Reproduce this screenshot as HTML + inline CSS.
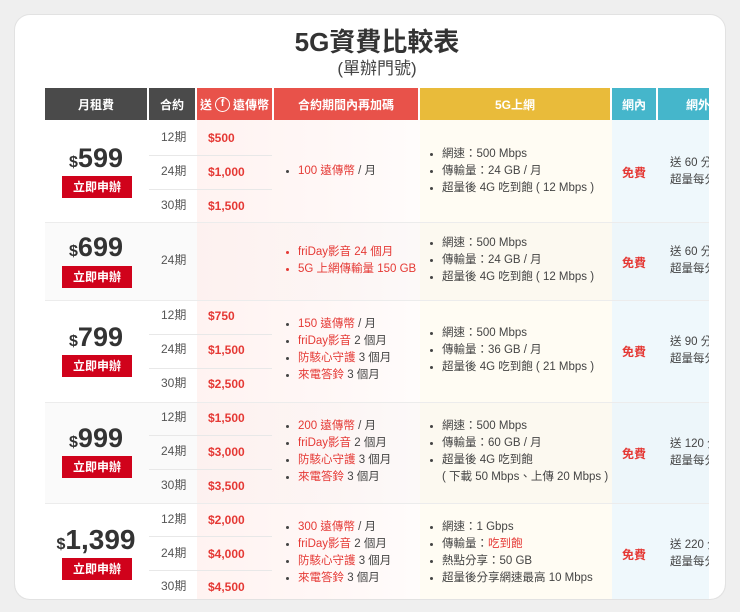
<!DOCTYPE html>
<html><head><meta charset="utf-8"><style>
*{margin:0;padding:0;box-sizing:border-box}
body{width:740px;height:612px;background:#efefef;font-family:"Liberation Sans","Noto Sans CJK TC",sans-serif;position:relative;overflow:hidden;color:#444}
.a{position:absolute}
.h{position:absolute;top:88px;height:32px;color:#fff;font-size:12px;font-weight:bold;display:flex;align-items:center;justify-content:center}
.r{color:#e53935}
.btn{position:absolute;left:62px;width:70px;height:22px;background:#d0021b;color:#fff;font-size:12px;font-weight:bold;text-align:center;line-height:22px}
.price{position:absolute;left:45px;width:102px;text-align:center;font-weight:bold;color:#333;font-size:27px}
.price small{font-size:16px}
.p{position:absolute;left:161px;font-size:12px;color:#555;margin-top:-3px}
.m{position:absolute;left:208px;font-size:12px;color:#e53935;font-weight:bold}
ul{position:absolute;font-size:11.5px;line-height:17px;padding-left:14px;color:#444}
li::marker{font-size:9px}
.sl{position:absolute;left:149px;width:123px;height:1px;background:#e8e8e8}
.rl{position:absolute;left:45px;width:664px;height:1px;background:#ececec}
.f{position:absolute;left:612px;width:44px;text-align:center;font-size:12px;color:#e53935;font-weight:bold}
.o{position:absolute;left:670px;font-size:11.5px;line-height:17px;white-space:nowrap;width:39px;overflow:hidden}
</style></head><body>
<div style="position:absolute;left:0;top:0;width:740px;height:612px">
<div class="a" style="left:0;top:0;width:740px;height:612px;background:#efefef"></div>
<div class="a" style="left:14px;top:14px;width:712px;height:586px;background:#fff;border-radius:16px;border:1px solid #e2e2e2"></div>
<div class="a" style="left:0;top:22px;width:740px;text-align:center;font-size:26px;font-weight:bold;color:#333;padding-left:14px">5G資費比較表</div>
<div class="a" style="left:0;top:54px;width:740px;text-align:center;font-size:17px;color:#444;padding-left:14px">(單辦門號)</div>
<div class="a" style="left:45px;top:222px;width:664px;height:78px;background:#fafafa"></div>
<div class="a" style="left:45px;top:402px;width:664px;height:101px;background:#fafafa"></div>
<div class="a" style="left:197px;top:120px;width:223px;height:480px;background:linear-gradient(90deg,rgba(255,235,232,.6),rgba(255,240,238,.5) 60%,rgba(255,248,246,.4))"></div>
<div class="a" style="left:420px;top:120px;width:192px;height:480px;background:rgba(255,246,220,.35)"></div>
<div class="a" style="left:612px;top:120px;width:97px;height:480px;background:rgba(225,242,250,.55)"></div>
<div class="h" style="left:45px;width:102px;background:#4a4a4a">月租費</div>
<div class="h" style="left:149px;width:46px;background:#4a4a4a">合約</div>
<div class="h" style="left:197px;width:75px;background:#e8524a">送 <span style="display:inline-block;width:15px;height:15px;border-radius:50%;border:1.5px solid #fff;font-size:10px;line-height:12px;text-align:center;margin:0 3px">f</span> 遠傳幣</div>
<div class="h" style="left:274px;width:144px;background:#e8524a">合約期間內再加碼</div>
<div class="h" style="left:420px;width:190px;background:#e9bb3a">5G上網</div>
<div class="h" style="left:612px;width:44px;background:#45b6cb">網內</div>
<div class="h" style="left:658px;width:51px;background:#45b6cb;justify-content:flex-start;padding-left:28px;overflow:hidden;white-space:nowrap">網外通話</div>
<div class="rl" style="top:222px"></div><div class="rl" style="top:300px"></div><div class="rl" style="top:402px"></div><div class="rl" style="top:503px"></div>
<div class="sl" style="top:155px"></div><div class="sl" style="top:189px"></div>
<div class="sl" style="top:334px"></div><div class="sl" style="top:368px"></div>
<div class="sl" style="top:435px"></div><div class="sl" style="top:469px"></div>
<div class="sl" style="top:536px"></div><div class="sl" style="top:570px"></div>
<div class="price" style="top:143px"><small>$</small>599</div><div class="btn" style="top:176px">立即申辦</div>
<div class="p" style="top:131px">12期</div><div class="m" style="top:131px">$500</div>
<div class="p" style="top:165px">24期</div><div class="m" style="top:165px">$1,000</div>
<div class="p" style="top:199px">30期</div><div class="m" style="top:199px">$1,500</div>
<ul style="left:284px;top:163px"><li><span class="r">100 遠傳幣</span> / 月</li></ul>
<ul style="left:428px;top:146px"><li>網速：500 Mbps</li><li>傳輸量：24 GB / 月</li><li>超量後 4G 吃到飽 ( 12 Mbps )</li></ul>
<div class="f" style="top:164px">免費</div>
<div class="o" style="top:155px">送 60 分<br>超量每分</div>
<div class="price" style="top:232px"><small>$</small>699</div><div class="btn" style="top:266px">立即申辦</div>
<div class="p" style="top:254px">24期</div>
<ul style="left:284px;top:244px"><li class="r">friDay影音 24 個月</li><li class="r">5G 上網傳輸量 150 GB</li></ul>
<ul style="left:428px;top:235px"><li>網速：500 Mbps</li><li>傳輸量：24 GB / 月</li><li>超量後 4G 吃到飽 ( 12 Mbps )</li></ul>
<div class="f" style="top:254px">免費</div>
<div class="o" style="top:244px">送 60 分<br>超量每分</div>
<div class="price" style="top:322px"><small>$</small>799</div><div class="btn" style="top:355px">立即申辦</div>
<div class="p" style="top:309px">12期</div><div class="m" style="top:309px">$750</div>
<div class="p" style="top:343px">24期</div><div class="m" style="top:343px">$1,500</div>
<div class="p" style="top:377px">30期</div><div class="m" style="top:377px">$2,500</div>
<ul style="left:284px;top:316px"><li><span class="r">150 遠傳幣</span> / 月</li><li><span class="r">friDay影音</span> 2 個月</li><li><span class="r">防駭心守護</span> 3 個月</li><li><span class="r">來電答鈴</span> 3 個月</li></ul>
<ul style="left:428px;top:325px"><li>網速：500 Mbps</li><li>傳輸量：36 GB / 月</li><li>超量後 4G 吃到飽 ( 21 Mbps )</li></ul>
<div class="f" style="top:343px">免費</div>
<div class="o" style="top:334px">送 90 分<br>超量每分</div>
<div class="price" style="top:423px"><small>$</small>999</div><div class="btn" style="top:456px">立即申辦</div>
<div class="p" style="top:411px">12期</div><div class="m" style="top:411px">$1,500</div>
<div class="p" style="top:445px">24期</div><div class="m" style="top:445px">$3,000</div>
<div class="p" style="top:479px">30期</div><div class="m" style="top:479px">$3,500</div>
<ul style="left:284px;top:418px"><li><span class="r">200 遠傳幣</span> / 月</li><li><span class="r">friDay影音</span> 2 個月</li><li><span class="r">防駭心守護</span> 3 個月</li><li><span class="r">來電答鈴</span> 3 個月</li></ul>
<ul style="left:428px;top:418px"><li>網速：500 Mbps</li><li>傳輸量：60 GB / 月</li><li>超量後 4G 吃到飽<br>( 下載 50 Mbps、上傳 20 Mbps )</li></ul>
<div class="f" style="top:445px">免費</div>
<div class="o" style="top:436px">送 120 分<br>超量每分</div>
<div class="price" style="top:524px;font-size:28px"><small>$</small>1,399</div><div class="btn" style="top:558px">立即申辦</div>
<div class="p" style="top:513px">12期</div><div class="m" style="top:513px">$2,000</div>
<div class="p" style="top:547px">24期</div><div class="m" style="top:547px">$4,000</div>
<div class="p" style="top:580px">30期</div><div class="m" style="top:580px">$4,500</div>
<ul style="left:284px;top:519px"><li><span class="r">300 遠傳幣</span> / 月</li><li><span class="r">friDay影音</span> 2 個月</li><li><span class="r">防駭心守護</span> 3 個月</li><li><span class="r">來電答鈴</span> 3 個月</li></ul>
<ul style="left:428px;top:519px"><li>網速：1 Gbps</li><li>傳輸量：<span class="r">吃到飽</span></li><li>熱點分享：50 GB</li><li>超量後分享網速最高 10 Mbps</li></ul>
<div class="f" style="top:546px">免費</div>
<div class="o" style="top:537px">送 220 分<br>超量每分</div>
<div class="a" style="left:0;top:599px;width:740px;height:13px;background:#efefef"></div>
<div class="a" style="left:14px;top:580px;width:712px;height:20px;border:1px solid #e2e2e2;border-top:none;border-radius:0 0 16px 16px;pointer-events:none"></div>
<div class="a" style="left:726px;top:14px;width:14px;height:598px;background:#efefef"></div>
</div>
</body></html>
